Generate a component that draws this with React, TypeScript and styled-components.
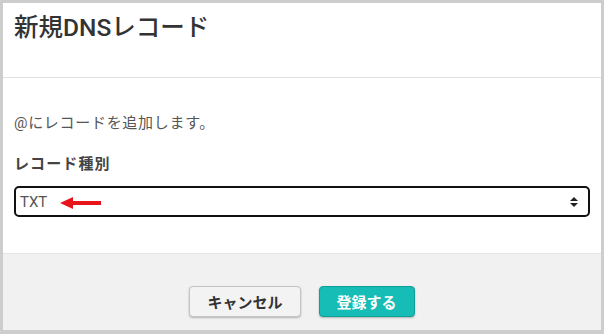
import React from 'react';
import styled, { createGlobalStyle } from 'styled-components';

const GlobalStyle = createGlobalStyle`
  html, body {
    margin: 0;
    padding: 0;
    background: #ffffff;
  }
  body {
    font-family: 'Roboto', 'Noto Sans CJK JP', sans-serif;
    color: #333333;
  }
`;

const Frame = styled.div`
  width: 604px;
  height: 334px;
  box-sizing: border-box;
  border: 3px solid #cdcdcd;
  border-bottom-width: 4px;
  display: flex;
  flex-direction: column;
  background: #ffffff;
`;

const Header = styled.div`
  height: 75px;
  box-sizing: border-box;
  padding: 9px 11px 0;
  border-bottom: 1px solid #e2e2e2;
`;

const Title = styled.h1`
  margin: 0;
  font-size: 24.5px;
  line-height: 32px;
  font-weight: 500;
  color: #333333;
`;

const Body = styled.div`
  flex: 1;
  padding: 34px 11px 0;
`;

const Intro = styled.p`
  margin: 0;
  font-size: 15px;
  line-height: 22px;
  letter-spacing: 0.7px;
  color: #555555;
`;

const Label = styled.div`
  margin-top: 19px;
  font-size: 15px;
  line-height: 22px;
  letter-spacing: 1.1px;
  font-weight: 700;
  color: #444444;
`;

const SelectBox = styled.div`
  position: relative;
  margin-top: 11px;
  height: 31px;
  box-sizing: border-box;
  border: 2px solid #111111;
  border-radius: 5px;
  display: flex;
  align-items: center;
  justify-content: space-between;
  padding: 0 10px 0 4px;
`;

const SelectValue = styled.span`
  font-size: 15px;
  color: #555555;
`;

const Annotation = styled.svg`
  position: absolute;
  left: 44px;
  top: 9px;
`;

const Footer = styled.div`
  height: 77px;
  box-sizing: border-box;
  background: #f1f1f1;
  border-top: 1px solid #e4e4e4;
  display: flex;
  justify-content: center;
  align-items: flex-start;
  gap: 18px;
  padding-top: 32px;
`;

const Button = styled.button<{ $primary?: boolean }>`
  height: 31px;
  box-sizing: border-box;
  padding: 0 17px;
  border-radius: 4px;
  font-family: 'Roboto', 'Noto Sans CJK JP', sans-serif;
  font-size: 15px;
  font-weight: 700;
  cursor: pointer;
  border: 1px solid ${({ $primary }) => ($primary ? '#0f9f99' : '#c4c4c4')};
  background: ${({ $primary }) => ($primary ? '#16bdb6' : '#f3f3f3')};
  color: ${({ $primary }) => ($primary ? '#ffffff' : '#333333')};
  box-shadow: 0 1px 2px rgba(0, 0, 0, 0.25);
`;

const SortIcon = () => (
  <svg width="8" height="10" viewBox="0 0 8 10">
    <path d="M4 0 L8 4 H0 Z" fill="#222" />
    <path d="M4 10 L8 6 H0 Z" fill="#222" />
  </svg>
);

export default function App() {
  return (
    <>
      <GlobalStyle />
      <Frame>
        <Header>
          <Title>新規DNSレコード</Title>
        </Header>
        <Body>
          <Intro>@にレコードを追加します。</Intro>
          <Label>レコード種別</Label>
          <SelectBox>
            <SelectValue>TXT</SelectValue>
            <SortIcon />
            <Annotation width="41" height="12" viewBox="0 0 41 12">
              <path d="M0 6 L13 0 V4 H41 V8 H13 V12 Z" fill="#e8141c" />
            </Annotation>
          </SelectBox>
        </Body>
        <Footer>
          <Button>キャンセル</Button>
          <Button $primary>登録する</Button>
        </Footer>
      </Frame>
    </>
  );
}
